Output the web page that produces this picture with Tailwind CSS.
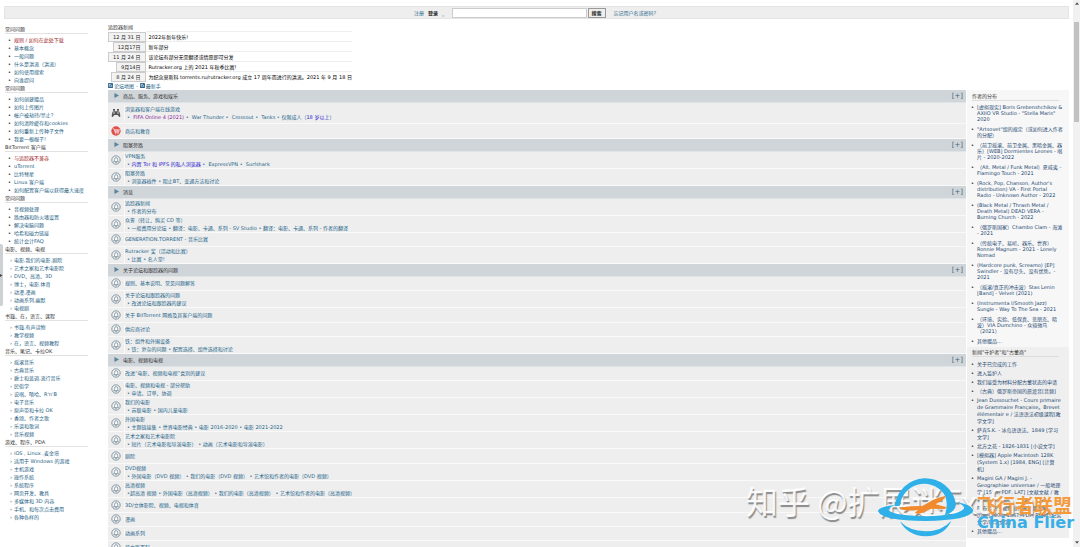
<!DOCTYPE html>
<html lang="zh-CN">
<head>
<meta charset="utf-8">
<title>Rutracker</title>
<script src="https://cdn.jsdelivr.net/npm/@tailwindcss/browser@4"></script>
</head>
<body class="relative h-screen overflow-hidden bg-white pt-[6px] font-['DejaVu_Sans','Noto_Sans_CJK_SC',sans-serif] text-[5px] leading-[8px] text-[#222]">
<svg class="hidden">
  <symbol id="bell" viewBox="0 0 30 30">
    <circle cx="15" cy="15" r="12.500" fill="#f4f6f7" stroke="#82959f" stroke-width="3"/>
    <path d="M8 20 Q11 18 11 13 Q11 8 15.500 8 Q20 8 20 13 Q20 18 22 20 Z M13 22 h5" fill="#fff" stroke="#72858f" stroke-width="2.400"/>
  </symbol>
  <symbol id="arrow" viewBox="0 0 12 12"><path d="M1 0 L12 6 L1 12Z" fill="#5a8497"/></symbol>
  <symbol id="note" viewBox="0 0 12 12"><rect width="12" height="12" rx="1" fill="#2f668c"/><path d="M3 9 V3 h3 M6 3 q4 3 3 6 M5 6 l2 3" fill="none" stroke="#fff" stroke-width="1.500"/></symbol>
</svg>

<form class="ml-[4px] mr-[11px] flex h-[13px] items-center border border-[#e4e4e4] bg-[#eee] pl-[409px]">
  <a href="#" class="text-[#2e6c8e]">注册</a>
  <a href="#" class="ml-[4px] font-bold text-[#222]">登录</a>
  <a href="#" class="ml-[4px] text-[#2e6c8e]">_</a>
  <input type="text" aria-label="搜索" class="ml-[7px] h-[10px] w-[135px] border border-[#ccc] bg-white px-[2px]">
  <button type="button" class="ml-[1px] h-[10px] w-[18px] border border-[#999] bg-[#efefef] font-bold leading-[8px] text-[#222]">搜索</button>
  <a href="#" class="ml-[8px] text-[#2e6c8e]">忘记用户名或密码?</a>
</form>

<div class="flex pr-[11px]">
  <nav class="w-[108px] shrink-0 pl-[5px] pr-[20px] pt-[6px] text-[#24607f] [&_h3]:mb-[2px] [&_h3]:border-b [&_h3]:border-[#e2e2e2] [&_h3]:text-[#333] [&_li]:flex [&_li]:whitespace-nowrap [&_li]:before:w-[6px] [&_li]:before:shrink-0 [&_ul]:pl-[3px]">
    <h3>常问问题</h3>
    <ul class="[&_li]:before:text-black [&_li]:before:content-['•']">
      <li><a href="#" class="text-[#a02828]">规则 / 如何在此处下载</a></li><li><a href="#">基本概念</a></li><li><a href="#">一般问题</a></li><li><a href="#">什么是洪流（洪流）</a></li><li><a href="#">如何使用搜索</a></li><li><a href="#">向谁提问</a></li>
    </ul>
    <h3>常问问题</h3>
    <ul class="[&_li]:before:text-black [&_li]:before:content-['•']">
      <li><a href="#">如何创建赠品</a></li><li><a href="#">如何上传图片</a></li><li><a href="#">帐户被劫持/禁止?</a></li><li><a href="#">如何清除缓存和cookies</a></li><li><a href="#">如何重新上传种子文件</a></li><li><a href="#">我要一根棍子!</a></li>
    </ul>
    <h3>BitTorrent 客户端</h3>
    <ul class="[&_li]:before:text-black [&_li]:before:content-['•']">
      <li><a href="#" class="text-[#a02828]">与追踪器不兼容</a></li><li><a href="#">uTorrent</a></li><li><a href="#">比特彗星</a></li><li><a href="#">Linux 客户端</a></li><li><a href="#">如何配置客户端以获得最大速度</a></li>
    </ul>
    <h3>常问问题</h3>
    <ul class="[&_li]:before:text-black [&_li]:before:content-['•']">
      <li><a href="#">音视频处理</a></li><li><a href="#">路由器和防火墙设置</a></li><li><a href="#">解决电脑问题</a></li><li><a href="#">哈希和磁力链接</a></li><li><a href="#">统计会计FAQ</a></li>
    </ul>
    <h3>电影、视频、电视</h3>
    <ul class="[&_li]:before:pl-[2px] [&_li]:before:content-['›']">
      <li><a href="#">电影,我们的电影,剧院</a></li><li><a href="#">艺术之家和艺术电影院</a></li><li><a href="#">DVD、高清、3D</a></li><li><a href="#">博士，电影,体育</a></li><li><a href="#">动漫,漫画</a></li><li><a href="#">动画系列,幽默</a></li><li><a href="#">电视剧</a></li>
    </ul>
    <h3>书籍、在，语言、课程</h3>
    <ul class="[&_li]:before:pl-[2px] [&_li]:before:content-['›']">
      <li><a href="#">书籍,有声读物</a></li><li><a href="#">教学视频</a></li><li><a href="#">在，语言、视频教程</a></li>
    </ul>
    <h3>音乐、笔记、卡拉OK</h3>
    <ul class="[&_li]:before:pl-[2px] [&_li]:before:content-['›']">
      <li><a href="#">摇滚音乐</a></li><li><a href="#">古典音乐</a></li><li><a href="#">爵士和蓝调,流行音乐</a></li><li><a href="#">民俗学</a></li><li><a href="#">说唱、嘻哈、R'n'B</a></li><li><a href="#">电子音乐</a></li><li><a href="#">原声带和卡拉 OK</a></li><li><a href="#">香颂、作者之歌</a></li><li><a href="#">乐谱和歌词</a></li><li><a href="#">音乐视频</a></li>
    </ul>
    <h3>游戏、程序、PDA</h3>
    <ul class="[&_li]:before:pl-[2px] [&_li]:before:content-['›']">
      <li><a href="#">iOS , Linux ,麦金塔</a></li><li><a href="#">适用于 Windows 的游戏</a></li><li><a href="#">主机游戏</a></li><li><a href="#">操作系统</a></li><li><a href="#">系统程序</a></li><li><a href="#">网页开发、教具</a></li><li><a href="#">多媒体和 3D 内容</a></li><li><a href="#">手机、和每次点击费用</a></li><li><a href="#">各种各样的</a></li>
    </ul>
  </nav>

  <div class="min-w-0 flex-1 pt-[4px]">
    <h3 class="text-[#333]">追踪器新闻</h3>
    <table class="border-collapse [&_span]:border [&_span]:border-[#ccc] [&_span]:bg-[#f3f3f3] [&_span]:px-[4px] [&_td]:h-[10px] [&_td]:p-0 [&_td]:text-black [&_td:last-child]:border-t [&_td:last-child]:border-[#eee] [&_td:last-child]:pl-[3px] [&_th]:w-[37px] [&_th]:p-0 [&_th]:text-right [&_th]:font-normal [&_th_span]:block [&_th_span]:ml-auto [&_th_span]:w-fit [&_th_span]:whitespace-nowrap">
      <tr><th scope="row"><span>12 月 31 日</span></th><td>2022年新年快乐!</td></tr>
      <tr><th scope="row"><span>12月17日</span></th><td>新年部分</td></tr>
      <tr><th scope="row"><span>11 月 24 日</span></th><td>该论坛有部分无需翻译或情愿即可分发</td></tr>
      <tr><th scope="row"><span>9月14日</span></th><td>Rutracker.org 上的 2021 年秋季比赛!</td></tr>
      <tr><th scope="row"><span>8 月 24 日</span></th><td>为纪念莫斯科 torrents.ru/rutracker.org 成立 17 周年而进行的洪流。2021 年 9 月 18 日</td></tr>
    </table>
    <p class="flex h-[8px] items-center text-[#24607f]"><svg class="mr-[1px] size-[5px]"><use href="#note"/></svg><a href="#">论坛地图</a><span class="mx-[2px]">-</span><svg class="mr-[1px] size-[5px]"><use href="#note"/></svg><a href="#">最新手</a></p>

    <div class="flex items-start">
      <main class="min-w-0 flex-1 text-[#24658a] [&_article]:flex [&_article]:min-h-[14px] [&_article]:items-center [&_article]:border-b [&_article]:border-[#f9f9f9] [&_article]:bg-[#eee] [&_article>div]:border-l [&_article>div]:border-[#f9f9f9] [&_article>svg]:mx-[3px] [&_article>svg]:size-[10px] [&_article>svg]:shrink-0 [&_h2]:flex [&_h2]:h-[13px] [&_h2]:items-center [&_h2]:border-b [&_h2]:border-[#dfe4e7] [&_h2]:bg-[#cfd5d9] [&_h2]:pl-[6px] [&_h2]:pr-[3px] [&_h2]:text-[#333] [&_h2_button]:ml-auto [&_h2_button]:text-[7px] [&_h2_button]:text-[#4b6678] [&_h2>svg]:mr-[4px] [&_h2>svg]:size-[5px] [&_p]:pl-[2px]">
        <h2><svg><use href="#arrow"/></svg>商品、服务、游戏和娱乐<button type="button">[+]</button></h2>
        <article class="h-[21px]"><svg viewBox="0 0 30 30"><path d="M4 27 Q1 27 3 17 Q4 10 8 10 H22 Q26 10 27 17 Q29 27 26 27 Q24 27 20 21 H10 Q6 27 4 27Z M6 3 h6 v5 H6Z M18 3 h6 v5 h-6Z" fill="#555"/><circle cx="9" cy="15" r="2.500" fill="#ddd"/><circle cx="21" cy="15" r="2.500" fill="#ddd"/></svg><div><a href="#">浏览器和客户端在线游戏</a><p>•&nbsp; <a href="#" class="text-[#8c2d9c]">FIFA Online 4 (2021)</a> •&nbsp; <a href="#">War Thunder</a> •&nbsp; <a href="#">Crossout</a> •&nbsp; <a href="#">Tanks</a> • <a href="#">仅限成人（<span class="text-[#2a22d0]">18 岁以上</span>）</a></p></div></article>
        <article class="h-[15px]"><svg viewBox="0 0 30 30"><circle cx="15" cy="15" r="14" fill="#df4d49"/><path d="M5 8 h4 l3 12 h11 l2 -9 H10 M14 11 v8 M18 11 v8 M21 11 v8 M11 15 h13" fill="none" stroke="#fff" stroke-width="1.600"/><circle cx="14" cy="23" r="1.500" fill="#fff"/><circle cx="21" cy="23" r="1.500" fill="#fff"/></svg><div><a href="#">商店和教育</a></div></article>
        <h2><svg><use href="#arrow"/></svg>阻塞旁路<button type="button">[+]</button></h2>
        <article><svg><use href="#bell"/></svg><div><a href="#">VPN服务</a><p>• <a href="#" class="text-[#2a22d0]">内置 Tor 和 IPFS 的私人浏览器</a> •&nbsp; <a href="#">ExpressVPN</a> •&nbsp; <a href="#">Surfshark</a></p></div></article>
        <article><svg><use href="#bell"/></svg><div><a href="#">阻塞旁路</a><p>• <a href="#">浏览器插件</a> • <a href="#">阻止BT、变通方法和讨论</a></p></div></article>
        <h2><svg><use href="#arrow"/></svg>消息<button type="button">[+]</button></h2>
        <article><svg><use href="#bell"/></svg><div><a href="#">追踪器新闻</a><p>• <a href="#">作者的分布</a></p></div></article>
        <article><svg><use href="#bell"/></svg><div><a href="#">众筹（转让、购买 CD 等）</a><p>• <a href="#">一般费用分论坛</a> • <a href="#">翻译：电影、卡通、系列 - SV Studio</a> • <a href="#">翻译：电影、卡通、系列 - 作者的翻译</a></p></div></article>
        <article><svg><use href="#bell"/></svg><div><a href="#">GENERATION.TORRENT - 音乐比赛</a></div></article>
        <article><svg><use href="#bell"/></svg><div><a href="#">Rutracker 奖（活动和比赛）</a><p>• <a href="#">比赛</a> • <a href="#">名人堂!</a></p></div></article>
        <h2><svg><use href="#arrow"/></svg>关于论坛和跟踪器的问题<button type="button">[+]</button></h2>
        <article><svg><use href="#bell"/></svg><div><a href="#">规则、基本说明、常见问题解答</a></div></article>
        <article><svg><use href="#bell"/></svg><div><a href="#">关于论坛和跟踪器的问题</a><p>• <a href="#">改进论坛和跟踪器的建议</a></p></div></article>
        <article class="h-[15px]"><svg><use href="#bell"/></svg><div><a href="#">关于 BitTorrent 网络及其客户端的问题</a></div></article>
        <article><svg><use href="#bell"/></svg><div><a href="#">供应商讨论</a></div></article>
        <article><svg><use href="#bell"/></svg><div><a href="#">铁：组件和外围设备</a><p>• <a href="#">铁：复杂的问题</a> • <a href="#">配置选择、组件选择和讨论</a></p></div></article>
        <h2><svg><use href="#arrow"/></svg>电影、视频和电视<button type="button">[+]</button></h2>
        <article><svg><use href="#bell"/></svg><div><a href="#">改进“电影、视频和电视”类别的建议</a></div></article>
        <article><svg><use href="#bell"/></svg><div><a href="#">电影、视频和电视 - 部分帮助</a><p>• <a href="#">申请、订单、协调</a></p></div></article>
        <article><svg><use href="#bell"/></svg><div><a href="#">我们的电影</a><p>• <a href="#">苏联电影</a> • <a href="#">国内儿童电影</a></p></div></article>
        <article><svg><use href="#bell"/></svg><div><a href="#">外国电影</a><p>• <a href="#">主题链接集</a> • <a href="#">世界电影经典</a> • <a href="#">电影 2016-2020</a> • <a href="#">电影 2021-2022</a></p></div></article>
        <article><svg><use href="#bell"/></svg><div><a href="#">艺术之家和艺术电影院</a><p>• <a href="#">短片（艺术电影和导演电影）</a> • <a href="#">动画（艺术电影和导演电影）</a></p></div></article>
        <article class="h-[15px]"><svg><use href="#bell"/></svg><div><a href="#">剧院</a></div></article>
        <article><svg><use href="#bell"/></svg><div><a href="#">DVD视频</a><p>• <a href="#">外国电影（DVD 视频）</a> • <a href="#">我们的电影（DVD 视频）</a> • <a href="#">艺术馆和作者的电影（DVD 视频）</a></p></div></article>
        <article><svg><use href="#bell"/></svg><div><a href="#">高清视频</a><p>•<a href="#">超高清 视频</a> • <a href="#">外国电影（高清视频）</a> • <a href="#">我们的电影（高清视频）</a> • <a href="#">艺术馆和作者的电影（高清视频）</a></p></div></article>
        <article class="h-[15px]"><svg><use href="#bell"/></svg><div><a href="#">3D/立体影院、视频、电视和体育</a></div></article>
        <article><svg><use href="#bell"/></svg><div><a href="#">漫画</a></div></article>
        <article><svg><use href="#bell"/></svg><div><a href="#">动画系列</a></div></article>
        <article><svg><use href="#bell"/></svg><div><a href="#">莫立斯百科</a></div></article>
      </main>

      <aside class="ml-[1px] w-[102px] shrink-0 text-[#1f4a73] [&_h3]:mr-[10px] [&_h3]:border-b [&_h3]:border-[#ddd] [&_h3]:text-[#333] [&_li]:relative [&_li]:before:absolute [&_li]:before:-left-[6px] [&_li]:before:text-black [&_li]:before:content-['•'] [&_section]:pl-[5px] [&_ul]:pl-[5px]">
        <section class="bg-[#f7f7f7] pb-[3px] pt-[2px]">
          <h3>作者的分布</h3>
          <ul class="mt-[3px] space-y-[4px] leading-[6px]">
            <li><a href="#">[虚拟现实] Boris Grebenshchikov &amp;<br>AXIIO VR Studio - "Stella Maris"<br>2020</a></li>
            <li><a href="#">"Artsovet"组的规定（或如何进入作者<br>的分配）</a></li>
            <li><a href="#">（前卫摇滚、前卫金属、黑暗金属、器<br>乐）[WEB] Dormientes Leones - 唱<br>片 - 2020-2022</a></li>
            <li><a href="#">（Alt. Metal / Funk Metal）夏威夷 -<br>Flamingo Touch - 2021</a></li>
            <li><a href="#">(Rock, Pop, Chanson, Author's<br>distribution) VA - First Portal<br>Radio - Unknown Author - 2022</a></li>
            <li><a href="#">(Black Metal / Thrash Metal /<br>Death Metal) DEAD VERA -<br>Burning Church - 2022</a></li>
            <li><a href="#">（俄罗斯国家）Chambo Clam - 海滩<br>- 2021</a></li>
            <li><a href="#">（传统电子、易听、器乐、世界）<br>Ronnie Magnum - 2021 - Lonely<br>Nomad</a></li>
            <li><a href="#">(Hardcore punk, Screamo) [EP]<br>Swindler - 没有尽头、没有优势。-<br>2021</a></li>
            <li><a href="#">（摇滚/真正的冲击波）Stas Lenin<br>[Band] - Velvet (2021)</a></li>
            <li><a href="#">(Instrumenta l/Smooth Jazz)<br>Sungle - Way To The Sea - 2021</a></li>
            <li><a href="#">（环境、实验、低保真、悲朋克、暗<br>波）VIA Dumchino - 众骑驰马<br>（2021）</a></li>
            <li><a href="#">其他赠品...</a></li>
          </ul>
        </section>
        <section class="bg-[#efefef] pb-[3px] pt-[1px]">
          <h3>新闻"守护者"和"古董商"</h3>
          <ul class="mt-[4px] space-y-[2px] leading-[7px]">
            <li><a href="#">关于已完成的工作</a></li>
            <li><a href="#">进入监护人</a></li>
            <li><a href="#">我们接受为材料分配古董状态的申请</a></li>
            <li><a href="#">（古典）俄罗斯帝国的晨渡音[音频]</a></li>
            <li><a href="#">Jean Dussouchet - Cours primaire<br>de Grammaire Française。Brevet<br>élémentair e / 法语语法初级课程[教<br>学文学]</a></li>
            <li><a href="#">萨宾S.K. - 冰岛语语法、1849 [学习<br>文学]</a></li>
            <li><a href="#">北方之花 - 1826-1831 [小说文学]</a></li>
            <li><a href="#">[模拟器] Apple Macintosh 128K<br>(System 1.x) [1984, ENG] [计算<br>机]</a></li>
            <li><a href="#">Magini GA / Magini J. -<br>Geographiae universae / 一般地理<br>学 [1596, PDF, LAT] [文献文献 / 教<br>程文学]</a></li>
            <li><a href="#">F. 布劳恩 - 我们如何教授俄罗斯<br>历史 [1906; 1867, PDF, RUS] [纪实<br>文学/科学文学]</a></li>
            <li><a href="#">其他赠品...</a></li>
          </ul>
        </section>
      </aside>
    </div>
  </div>
</div>

<div class="absolute left-0 top-[244px] flex h-[62px] w-[3px] items-center rounded-r-[2px] bg-[#ccd1d4]"><svg class="size-[3px]" viewBox="0 0 6 6"><path d="M0 0 L5 3 L0 6Z" fill="#444"/></svg></div>

<div class="absolute inset-y-0 right-0 flex w-[7px] flex-col items-center bg-[#f1f1f1]">
  <svg class="mt-[2px] h-[3px] w-[4px]" viewBox="0 0 8 5"><path d="M0 5 L4 0 L8 5Z" fill="#555"/></svg>
  <div class="mt-[17px] h-[100px] w-[5px] bg-[#c1c1c1]"></div>
  <svg class="mb-[3px] mt-auto h-[3px] w-[4px]" viewBox="0 0 8 5"><path d="M0 0 L4 5 L8 0Z" fill="#555"/></svg>
</div>

<div class="absolute bottom-[27px] right-[18px] w-[316px] whitespace-nowrap font-['Noto_Sans_CJK_SC',sans-serif] text-[32px] leading-[40px] text-white/90 [text-shadow:1px_2px_1px_#888]">知乎 @扩展迷Extfans</div>
<svg class="absolute bottom-[8px] right-[102px] h-[70px] w-[104px]" viewBox="0 0 312 210">
  <path d="M62 112 A93 93 0 0 1 246 104 Q246 128 212 140 Q226 98 208 72 A73 73 0 0 0 78 110 Z" fill="#2fb0e9"/>
  <path d="M65 107 Q10 114 12 127 Q25 156 155 156 Q285 154 298 126 Q297 107 246 99 Q278 112 268 121 Q250 140 155 142 Q55 140 45 124 Q42 115 65 107Z" fill="#2fb0e9"/>
  <path d="M78 157 Q105 186 155 187 Q205 186 232 155 Q212 201 155 202 Q102 201 78 157Z" fill="#2fb0e9"/>
  <path d="M75 117 Q100 110 145 111 L175 94 Q192 85 214 81 Q216 86 205 94 L185 106 L219 115 L212 120 L172 119 L145 131 Q134 136 122 132 L132 123 Q105 126 88 123 Z" fill="#f08a2c"/>
</svg>
<div class="absolute bottom-[17px] right-[5px] w-[98px] whitespace-nowrap font-bold">
  <div class="font-['Noto_Sans_CJK_SC',sans-serif] text-[19px] leading-[20px] text-[#f59a3a]">飞行者联盟</div>
  <div class="text-[16px] leading-[15px] text-[#38aee6]">China Flier</div>
</div>
</body>
</html>
